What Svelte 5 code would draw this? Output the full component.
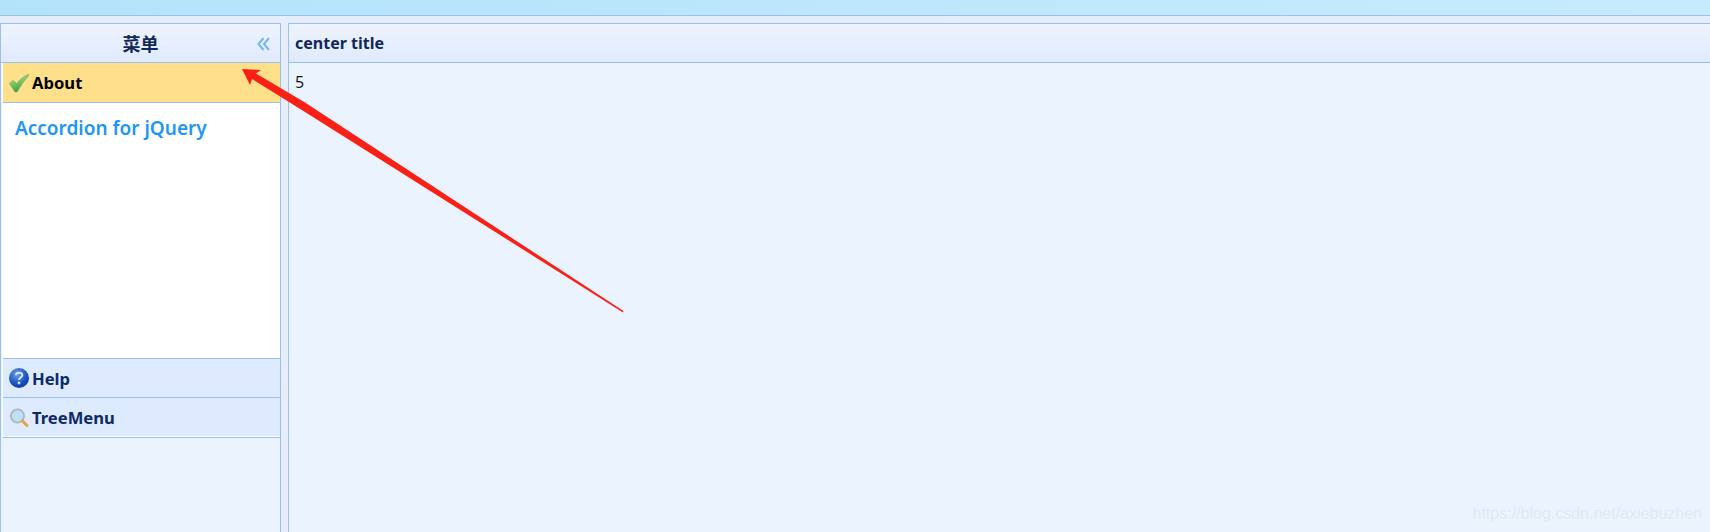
<script>
  const items = [
    { title: "Help", icon: "help" },
    { title: "TreeMenu", icon: "search" },
  ];
</script>

<div class="layout">
  <div class="north"></div>
  <div class="main">
    <aside class="west">
      <div class="panel-head west-head">
        <span class="west-title">菜单</span>
        <svg class="collapse" width="13" height="14" viewBox="0 0 13 14" fill="none" stroke="#78b8f2" stroke-width="2">
          <path d="M6.5 1 L1.5 7 L6.5 13" />
          <path d="M12 1 L7 7 L12 13" />
        </svg>
      </div>
      <div class="accordion">
        <div class="acc-head selected">
          <svg class="icon" width="20" height="20" viewBox="0 0 20 20">
            <defs>
              <linearGradient id="tick" x1="0" y1="0" x2="0.4" y2="1">
                <stop offset="0" stop-color="#c4ee9c" />
                <stop offset="0.55" stop-color="#74cc58" />
                <stop offset="1" stop-color="#3a9a3c" />
              </linearGradient>
            </defs>
            <path d="M0.5 10.4 L4.2 7.6 L7.6 10.6 C10.5 7 14.5 3.6 19.6 1.2 L19.8 2.6 C15.5 7 11.5 12.5 8.4 18.8 L6 19 Z" fill="url(#tick)" stroke="#84a07c" stroke-width="0.8" />
          </svg>
          <span>About</span>
        </div>
        <div class="acc-body">
          <span class="link">Accordion for jQuery</span>
        </div>
        {#each items as item}
          <div class="acc-head">
            {#if item.icon === "help"}
              <svg class="icon" width="20" height="20" viewBox="0 0 20 20">
                <defs>
                  <radialGradient id="ball" cx="0.4" cy="0.3" r="0.8">
                    <stop offset="0" stop-color="#6f9fe8" />
                    <stop offset="0.6" stop-color="#1a55c4" />
                    <stop offset="1" stop-color="#0c2f8c" />
                  </radialGradient>
                </defs>
                <circle cx="10" cy="10" r="10" fill="url(#ball)" />
                <path d="M6.8 7.2 C7 3.8 13.4 3.8 13.3 7.2 C13.2 9.4 10 9.4 10 12" fill="none" stroke="#d5e2f7" stroke-width="2" />
                <circle cx="10" cy="15" r="1.4" fill="#d5e2f7" />
              </svg>
            {:else}
              <svg class="icon" width="20" height="20" viewBox="0 0 20 20">
                <circle cx="8.5" cy="8" r="6.6" fill="#bfe0fb" stroke="#aeb4b8" stroke-width="1.8" />
                <path d="M13.4 13 L18 17.6" stroke="#e8a043" stroke-width="2.8" stroke-linecap="round" />
              </svg>
            {/if}
            <span>{item.title}</span>
          </div>
        {/each}
      </div>
    </aside>
    <section class="center">
      <div class="panel-head center-head">center title</div>
      <div class="center-body">5</div>
    </section>
  </div>

  <!-- annotation arrow drawn over the screenshot -->
  <svg class="arrow" width="1710" height="532" viewBox="0 0 1710 532">
    <path d="M242 69 L261 70 L256 73.5 L305 102.5 L623.5 311 L623 312.5 L305 112 L252 79 L250 85 Z" fill="#fb2016" />
  </svg>

  <div class="watermark">https://blog.csdn.net/axiebuzhen</div>
</div>

<style>
  :global(body) {
    margin: 0;
    background: #e5eefa;
  }

  .layout {
    position: relative;
    width: 1710px;
    height: 532px;
    overflow: hidden;
    font-family: "Noto Sans", "Noto Sans CJK SC", sans-serif;
  }

  .north {
    height: 16px;
    box-sizing: border-box;
    background: linear-gradient(to right, #b3e3fb, #c6ebfd);
    border-bottom: 1px solid #9cc0ea;
  }

  .main {
    display: flex;
    gap: 7px;
    height: 509px;
    margin-top: 7px;
  }

  .west {
    width: 281px;
    flex: none;
    box-sizing: border-box;
    background: #ebf3ff;
    border: 1px solid #9cc0ea;
    border-bottom: none;
  }

  .panel-head {
    height: 39px;
    box-sizing: border-box;
    background: linear-gradient(to bottom, #eef4fe, #dfeafd);
    border-bottom: 1px solid #9cc0ea;
    color: #12285a;
    font-weight: 700;
    font-size: 16px;
  }

  .west-head {
    display: flex;
    align-items: center;
    justify-content: center;
    position: relative;
  }

  .west-title {
    font-size: 18px;
  }

  .collapse {
    position: absolute;
    right: 10px;
    top: 13px;
  }

  .accordion {
    margin-left: 1px;
    border-bottom: 1px solid #9cc0ea;
    border-left: 1px solid #fff;
  }

  .acc-head {
    display: flex;
    align-items: center;
    gap: 3px;
    height: 39px;
    box-sizing: border-box;
    padding-left: 6px;
    background: #deebfe;
    color: #0e2a66;
    font-weight: 700;
    font-size: 16.6px;
    border-bottom: 1px solid #9cc0ea;
  }

  .acc-head:last-child {
    border-bottom: none;
    box-shadow: inset 0 -1px 0 #fff;
  }

  .acc-head.selected {
    height: 40px;
    background: #ffe08a;
    color: #000;
  }

  .icon {
    flex: none;
  }

  .acc-body {
    height: 256px;
    box-sizing: border-box;
    padding: 11px 12px;
    background: #fff;
    border-bottom: 1px solid #9cc0ea;
  }

  .link {
    color: #1e96f5;
    font-size: 19px;
    font-weight: 600;
    line-height: 28px;
  }

  .center {
    flex: 1;
    box-sizing: border-box;
    background: #ebf3ff;
    border: 1px solid #9cc0ea;
    border-right: none;
    border-bottom: none;
  }

  .center-head {
    display: flex;
    align-items: center;
    padding-left: 6px;
  }

  .center-body {
    padding: 9px 6px;
    color: #111;
    font-family: "Open Sans", sans-serif;
    font-size: 16px;
    line-height: 20px;
  }

  .arrow {
    position: absolute;
    inset: 0;
    pointer-events: none;
  }

  .watermark {
    position: absolute;
    right: 8px;
    bottom: 9px;
    color: #e0e6f1;
    font-family: "Liberation Sans", sans-serif;
    font-size: 16px;
    text-shadow: 0 1px 1px #f4f7fd;
  }
</style>
